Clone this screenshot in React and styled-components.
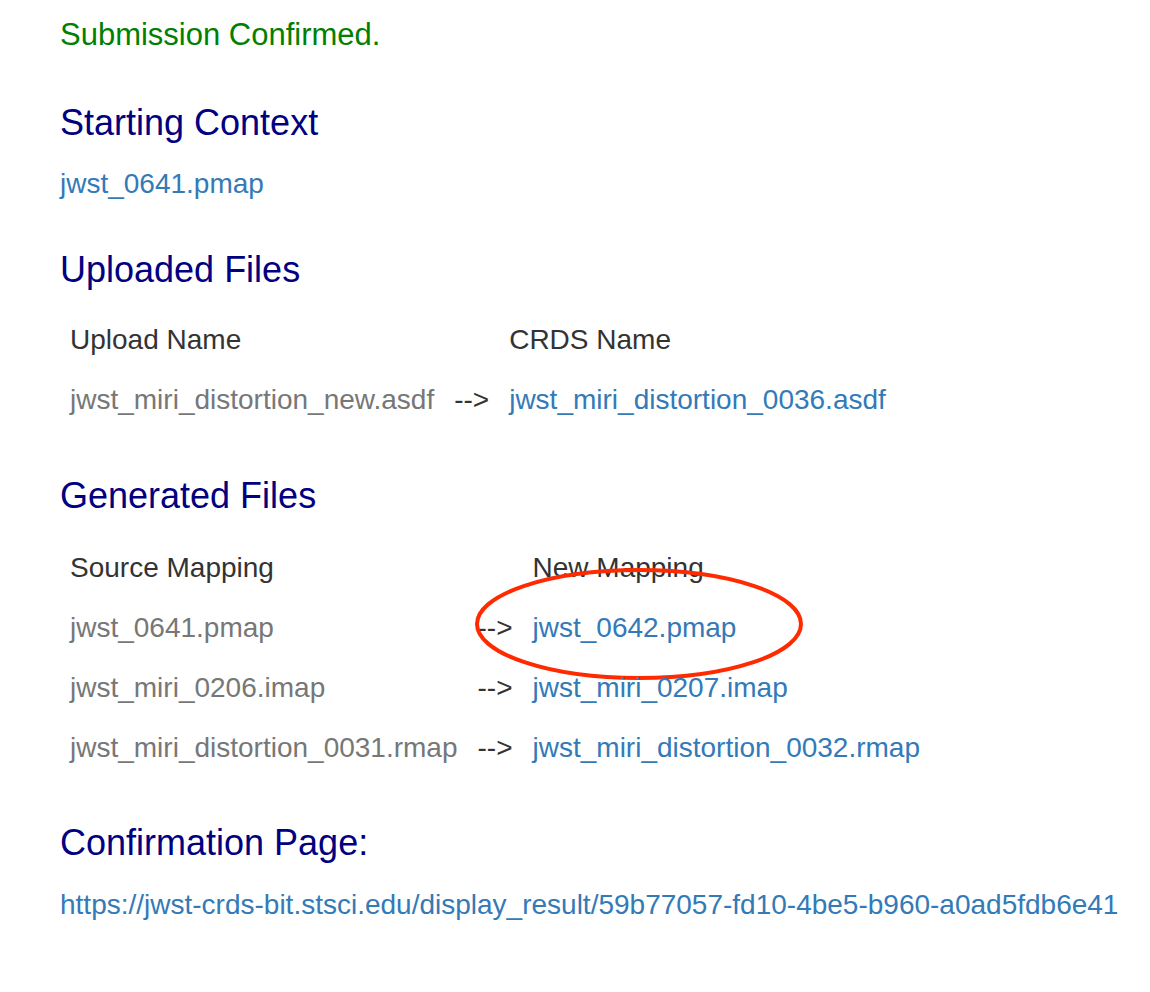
import React from "react";
import styled, { createGlobalStyle } from "styled-components";

const GlobalStyle = createGlobalStyle`
  body {
    margin: 0;
    background: #fff;
    font-family: "Liberation Sans", Arial, Helvetica, sans-serif;
  }
`;

const uploaded = [
  { upload: "jwst_miri_distortion_new.asdf", crds: "jwst_miri_distortion_0036.asdf" },
];

const generated = [
  { source: "jwst_0641.pmap", target: "jwst_0642.pmap", circled: true },
  { source: "jwst_miri_0206.imap", target: "jwst_miri_0207.imap" },
  { source: "jwst_miri_distortion_0031.rmap", target: "jwst_miri_distortion_0032.rmap" },
];

function App() {
  return (
    <Page>
      <GlobalStyle />
      <Status>Submission Confirmed.</Status>

      <Section $top={50}>
        <Heading $gap={25}>Starting Context</Heading>
        <Block>
          <Link href="#">jwst_0641.pmap</Link>
        </Block>
      </Section>

      <Section $top={50}>
        <Heading $gap={20}>Uploaded Files</Heading>
        <FileTable>
          <tbody>
            <tr>
              <HeadCell>Upload Name</HeadCell>
              <HeadCell />
              <HeadCell>CRDS Name</HeadCell>
            </tr>
            {uploaded.map((row) => (
              <tr key={row.upload}>
                <NameCell>{row.upload}</NameCell>
                <ArrowCell>--&gt;</ArrowCell>
                <LinkCell>
                  <Link href="#">{row.crds}</Link>
                </LinkCell>
              </tr>
            ))}
          </tbody>
        </FileTable>
      </Section>

      <Section $top={46}>
        <Heading $gap={22}>Generated Files</Heading>
        <FileTable>
          <tbody>
            <tr>
              <HeadCell>Source Mapping</HeadCell>
              <HeadCell />
              <HeadCell>New Mapping</HeadCell>
            </tr>
            {generated.map((row) => (
              <tr key={row.source}>
                <NameCell>{row.source}</NameCell>
                <ArrowCell>--&gt;</ArrowCell>
                <LinkCell>
                  <Link href="#">{row.target}</Link>
                  {row.circled && (
                    <Circle width="334" height="116" viewBox="0 0 334 116">
                      <ellipse
                        cx="167"
                        cy="58"
                        rx="162"
                        ry="54"
                        fill="none"
                        stroke="#ff2a00"
                        strokeWidth="4"
                      />
                    </Circle>
                  )}
                </LinkCell>
              </tr>
            ))}
          </tbody>
        </FileTable>
      </Section>

      <Section $top={45}>
        <Heading $gap={26}>Confirmation Page:</Heading>
        <Block>
          <Link href="#">
            https://jwst-crds-bit.stsci.edu/display_result/59b77057-fd10-4be5-b960-a0ad5fdb6e41
          </Link>
        </Block>
      </Section>
    </Page>
  );
}

export default App;

const Page = styled.div`
  padding: 17px 0 60px 60px;
  min-height: 992px;
  box-sizing: border-box;
`;

const Status = styled.div`
  font-size: 31px;
  line-height: 36px;
  color: #008000;
`;

const Section = styled.section`
  margin-top: ${(p) => p.$top}px;
`;

const Heading = styled.h3`
  margin: 0 0 ${(p) => p.$gap}px;
  font-size: 36px;
  line-height: 40px;
  font-weight: normal;
  color: #000080;
`;

const Block = styled.div`
  font-size: 28px;
  line-height: 32px;
`;

const Link = styled.a`
  color: #337ab7;
  text-decoration: none;
`;

const FileTable = styled.table`
  border-collapse: collapse;
  font-size: 28px;

  td {
    height: 60px;
    padding: 0 10px;
    white-space: nowrap;
    vertical-align: middle;
  }
`;

const HeadCell = styled.td`
  color: #333;
`;

const NameCell = styled.td`
  color: #777;
`;

const ArrowCell = styled.td`
  color: #333;
`;

const LinkCell = styled.td`
  position: relative;
`;

const Circle = styled.svg`
  position: absolute;
  left: -51px;
  top: -32px;
  pointer-events: none;
`;
